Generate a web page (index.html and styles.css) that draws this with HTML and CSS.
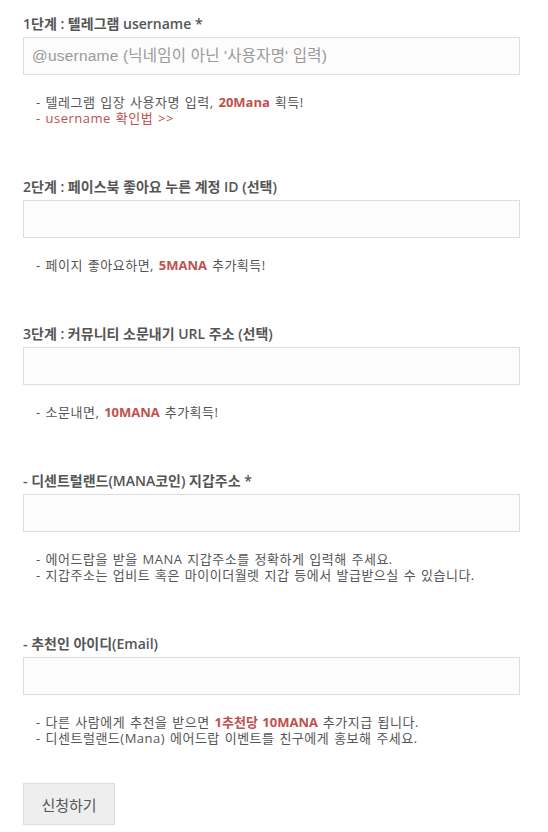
FILE: index.html
```html
<!DOCTYPE html>
<html lang="ko">
<head>
<meta charset="utf-8">
<title>신청</title>
<link rel="stylesheet" href="styles.css">
</head>
<body>
<form class="form">
  <div class="field">
    <label class="label">1단계 : 텔레그램 username *</label>
    <input class="input" type="text" placeholder="@username (닉네임이 아닌 '사용자명' 입력)">
    <ul class="help">
      <li>- 텔레그램 입장 사용자명 입력, <b class="hl">20Mana</b> 획득!</li>
      <li class="red">- username 확인법 &gt;&gt;</li>
    </ul>
  </div>
  <div class="field">
    <label class="label">2단계 : 페이스북 좋아요 누른 계정 ID (선택)</label>
    <input class="input" type="text">
    <ul class="help">
      <li>- 페이지 좋아요하면, <b class="hl">5MANA</b> 추가획득!</li>
    </ul>
  </div>
  <div class="field">
    <label class="label">3단계 : 커뮤니티 소문내기 URL 주소 (선택)</label>
    <input class="input" type="text">
    <ul class="help">
      <li>- 소문내면, <b class="hl">10MANA</b> 추가획득!</li>
    </ul>
  </div>
  <div class="field">
    <label class="label">- 디센트럴랜드(MANA코인) 지갑주소 *</label>
    <input class="input" type="text">
    <ul class="help">
      <li>- 에어드랍을 받을 MANA 지갑주소를 정확하게 입력해 주세요.</li>
      <li>- 지갑주소는 업비트 혹은 마이이더월렛 지갑 등에서 발급받으실 수 있습니다.</li>
    </ul>
  </div>
  <div class="field last">
    <label class="label">- 추천인 아이디(Email)</label>
    <input class="input" type="text">
    <ul class="help">
      <li>- 다른 사람에게 추천을 받으면 <b class="hl">1추천당 10MANA</b> 추가지급 됩니다.</li>
      <li>- 디센트럴랜드(Mana) 에어드랍 이벤트를 친구에게 홍보해 주세요.</li>
    </ul>
  </div>
  <button class="submit" type="button">신청하기</button>
</form>
</body>
</html>
```
FILE: styles.css
```css
html, body {
  margin: 0;
  padding: 0;
  background: #fff;
}
body {
  font-family: "Open Sans", "Noto Sans CJK KR", sans-serif;
  color: #555;
}
.form {
  padding: 14px 28px 0 23px;
  display: flex;
  flex-direction: column;
  align-items: flex-start;
}
.field {
  width: 497px;
  margin-bottom: 51px;
}
.field.last {
  margin-bottom: 37px;
}
.label {
  display: block;
  font-size: 14px;
  font-weight: 600;
  line-height: 20px;
  margin-bottom: 3px;
  color: #555;
}
.input {
  display: block;
  box-sizing: border-box;
  width: 497px;
  height: 38px;
  margin: 0;
  padding: 0 8px;
  border: 1px solid #ddd;
  background: #fcfcfc;
  font-family: "Liberation Sans", "Noto Sans CJK KR", sans-serif;
  font-size: 15.5px;
  letter-spacing: 0.2px;
  color: #555;
  outline: none;
}
.input::placeholder {
  color: #999;
}
.help {
  list-style: none;
  margin: 19px 0 0 0;
  padding: 0 0 0 13px;
  font-size: 13px;
  line-height: 16px;
  color: #555;
}
.help li {
  margin: 0;
  word-spacing: 1px;
  letter-spacing: 0.5px;
}
.hl {
  color: #c0504d;
  font-weight: 700;
  letter-spacing: 0;
}
.red {
  color: #c0504d;
}
.submit {
  box-sizing: border-box;
  width: 92px;
  height: 42px;
  margin: 0;
  padding: 0;
  border: 1px solid #ddd;
  background: #eee;
  font-family: "Noto Sans CJK KR", sans-serif;
  font-size: 15px;
  color: #555;
}
```
